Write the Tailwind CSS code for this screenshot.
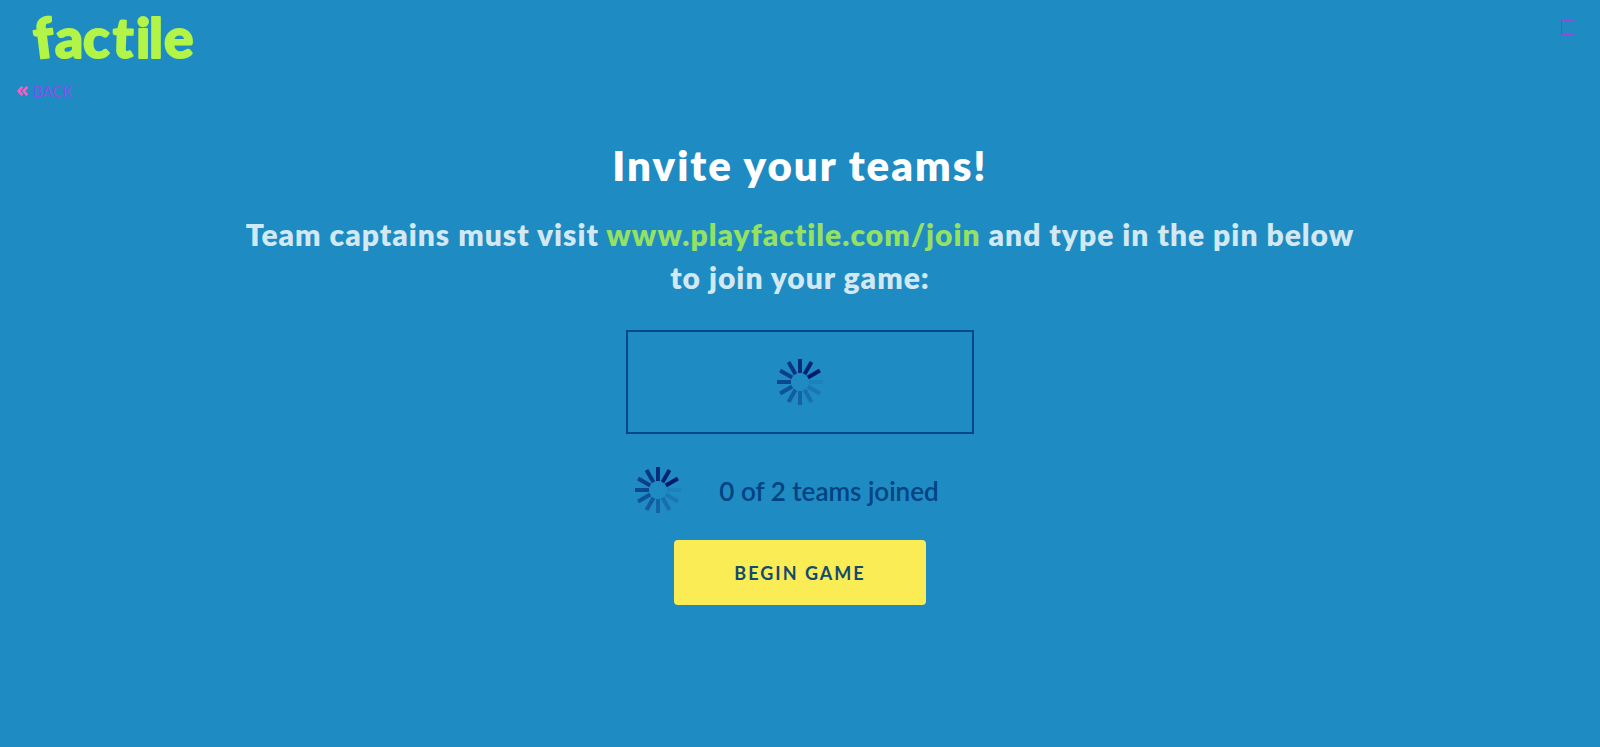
<!DOCTYPE html>
<html lang="en">
<head>
<meta charset="utf-8">
<meta name="viewport" content="width=device-width, initial-scale=1">
<title>Factile - Invite your teams</title>
<script src="https://cdn.jsdelivr.net/npm/@tailwindcss/browser@4"></script>
</head>
<body class="min-h-screen bg-[#1f8bc3] font-['Lato',sans-serif]">
<svg class="hidden" aria-hidden="true">
  <symbol id="spinner" viewBox="-23 -23 46 46">
    <g fill="#001a6b">
      <rect x="-2" y="-23" width="4" height="14" opacity=".84"/>
      <rect x="-2" y="-23" width="4" height="14" opacity=".92" transform="rotate(30)"/>
      <rect x="-2" y="-23" width="4" height="14" transform="rotate(60)"/>
      <rect x="-2" y="-23" width="4" height="14" opacity=".08" transform="rotate(90)"/>
      <rect x="-2" y="-23" width="4" height="14" opacity=".17" transform="rotate(120)"/>
      <rect x="-2" y="-23" width="4" height="14" opacity=".25" transform="rotate(150)"/>
      <rect x="-2" y="-23" width="4" height="14" opacity=".34" transform="rotate(180)"/>
      <rect x="-2" y="-23" width="4" height="14" opacity=".42" transform="rotate(210)"/>
      <rect x="-2" y="-23" width="4" height="14" opacity=".5" transform="rotate(240)"/>
      <rect x="-2" y="-23" width="4" height="14" opacity=".59" transform="rotate(270)"/>
      <rect x="-2" y="-23" width="4" height="14" opacity=".67" transform="rotate(300)"/>
      <rect x="-2" y="-23" width="4" height="14" opacity=".75" transform="rotate(330)"/>
    </g>
  </symbol>
</svg>
<header class="flex items-start justify-between pl-8 pr-6">
  <a href="#" aria-label="factile" class="block pt-2">
    <svg width="170" height="58" viewBox="0 0 170 58" class="overflow-visible"><text x="4 23 51 80 104 117 132" y="51 50 50 49 50 50 50" rotate="-7 0 0 2 0 0 0" class="text-[55px] font-black" fill="#b2f547" stroke="#b2f547" stroke-width="2" stroke-linejoin="round">factile</text></svg>
  </a>
  <button type="button" aria-label="Fullscreen" class="mt-5 cursor-pointer pr-[2px]">
    <svg width="13" height="15" viewBox="0 0 13 15" fill="none"><path d="M.5 0v15" stroke="#1e6df0"/><path d="M12.5 0v15" stroke="#6a63d3"/><path d="M1 .5h12M1 14.5h12" stroke="#9a45e0"/></svg>
  </button>
</header>
<nav class="mt-[13px] pl-4">
  <a href="#" class="flex items-center gap-1 text-[15px] leading-6 text-[#8b4ee8]">
    <svg width="13" height="10" viewBox="0 0 13 10" fill="none" stroke="#ff5cc0" stroke-width="2.6" aria-hidden="true"><path d="M6.3.8 2.7 5l3.6 4.2M11.3.8 7.7 5l3.6 4.2"/></svg>
    BACK
  </a>
</nav>
<main class="mx-auto flex max-w-[1170px] flex-col items-center px-4 pt-[38px] text-center">
  <h1 class="text-[42px] leading-[48px] font-extrabold tracking-[2px] text-white">Invite your teams!</h1>
  <p class="mt-6 text-[30px] leading-[43px] font-extrabold tracking-[1px] text-[#d2e8f3]">Team captains must visit <a href="#" class="text-[#94e163]">www.playfactile.com/join</a> and type in the pin below to join your game:</p>
  <div class="mt-[31px] flex h-[104px] w-full max-w-[348px] items-center justify-center border-2 border-[#00468f]" role="status" aria-label="Loading pin">
    <svg class="size-[46px]"><use href="#spinner"/></svg>
  </div>
  <div class="mt-[33px] flex items-center gap-[38px] pr-[26px]">
    <svg class="size-[46px]" aria-hidden="true"><use href="#spinner"/></svg>
    <p class="pt-[2px] text-[26px] leading-8 font-semibold text-[#004282]">0 of 2 teams joined</p>
  </div>
  <button type="button" class="mt-[27px] h-[65px] w-[252px] cursor-pointer rounded bg-[#faec55] pt-[2px] text-[18px] font-bold tracking-[2px] text-[#124a70]">BEGIN GAME</button>
</main>
</body>
</html>
